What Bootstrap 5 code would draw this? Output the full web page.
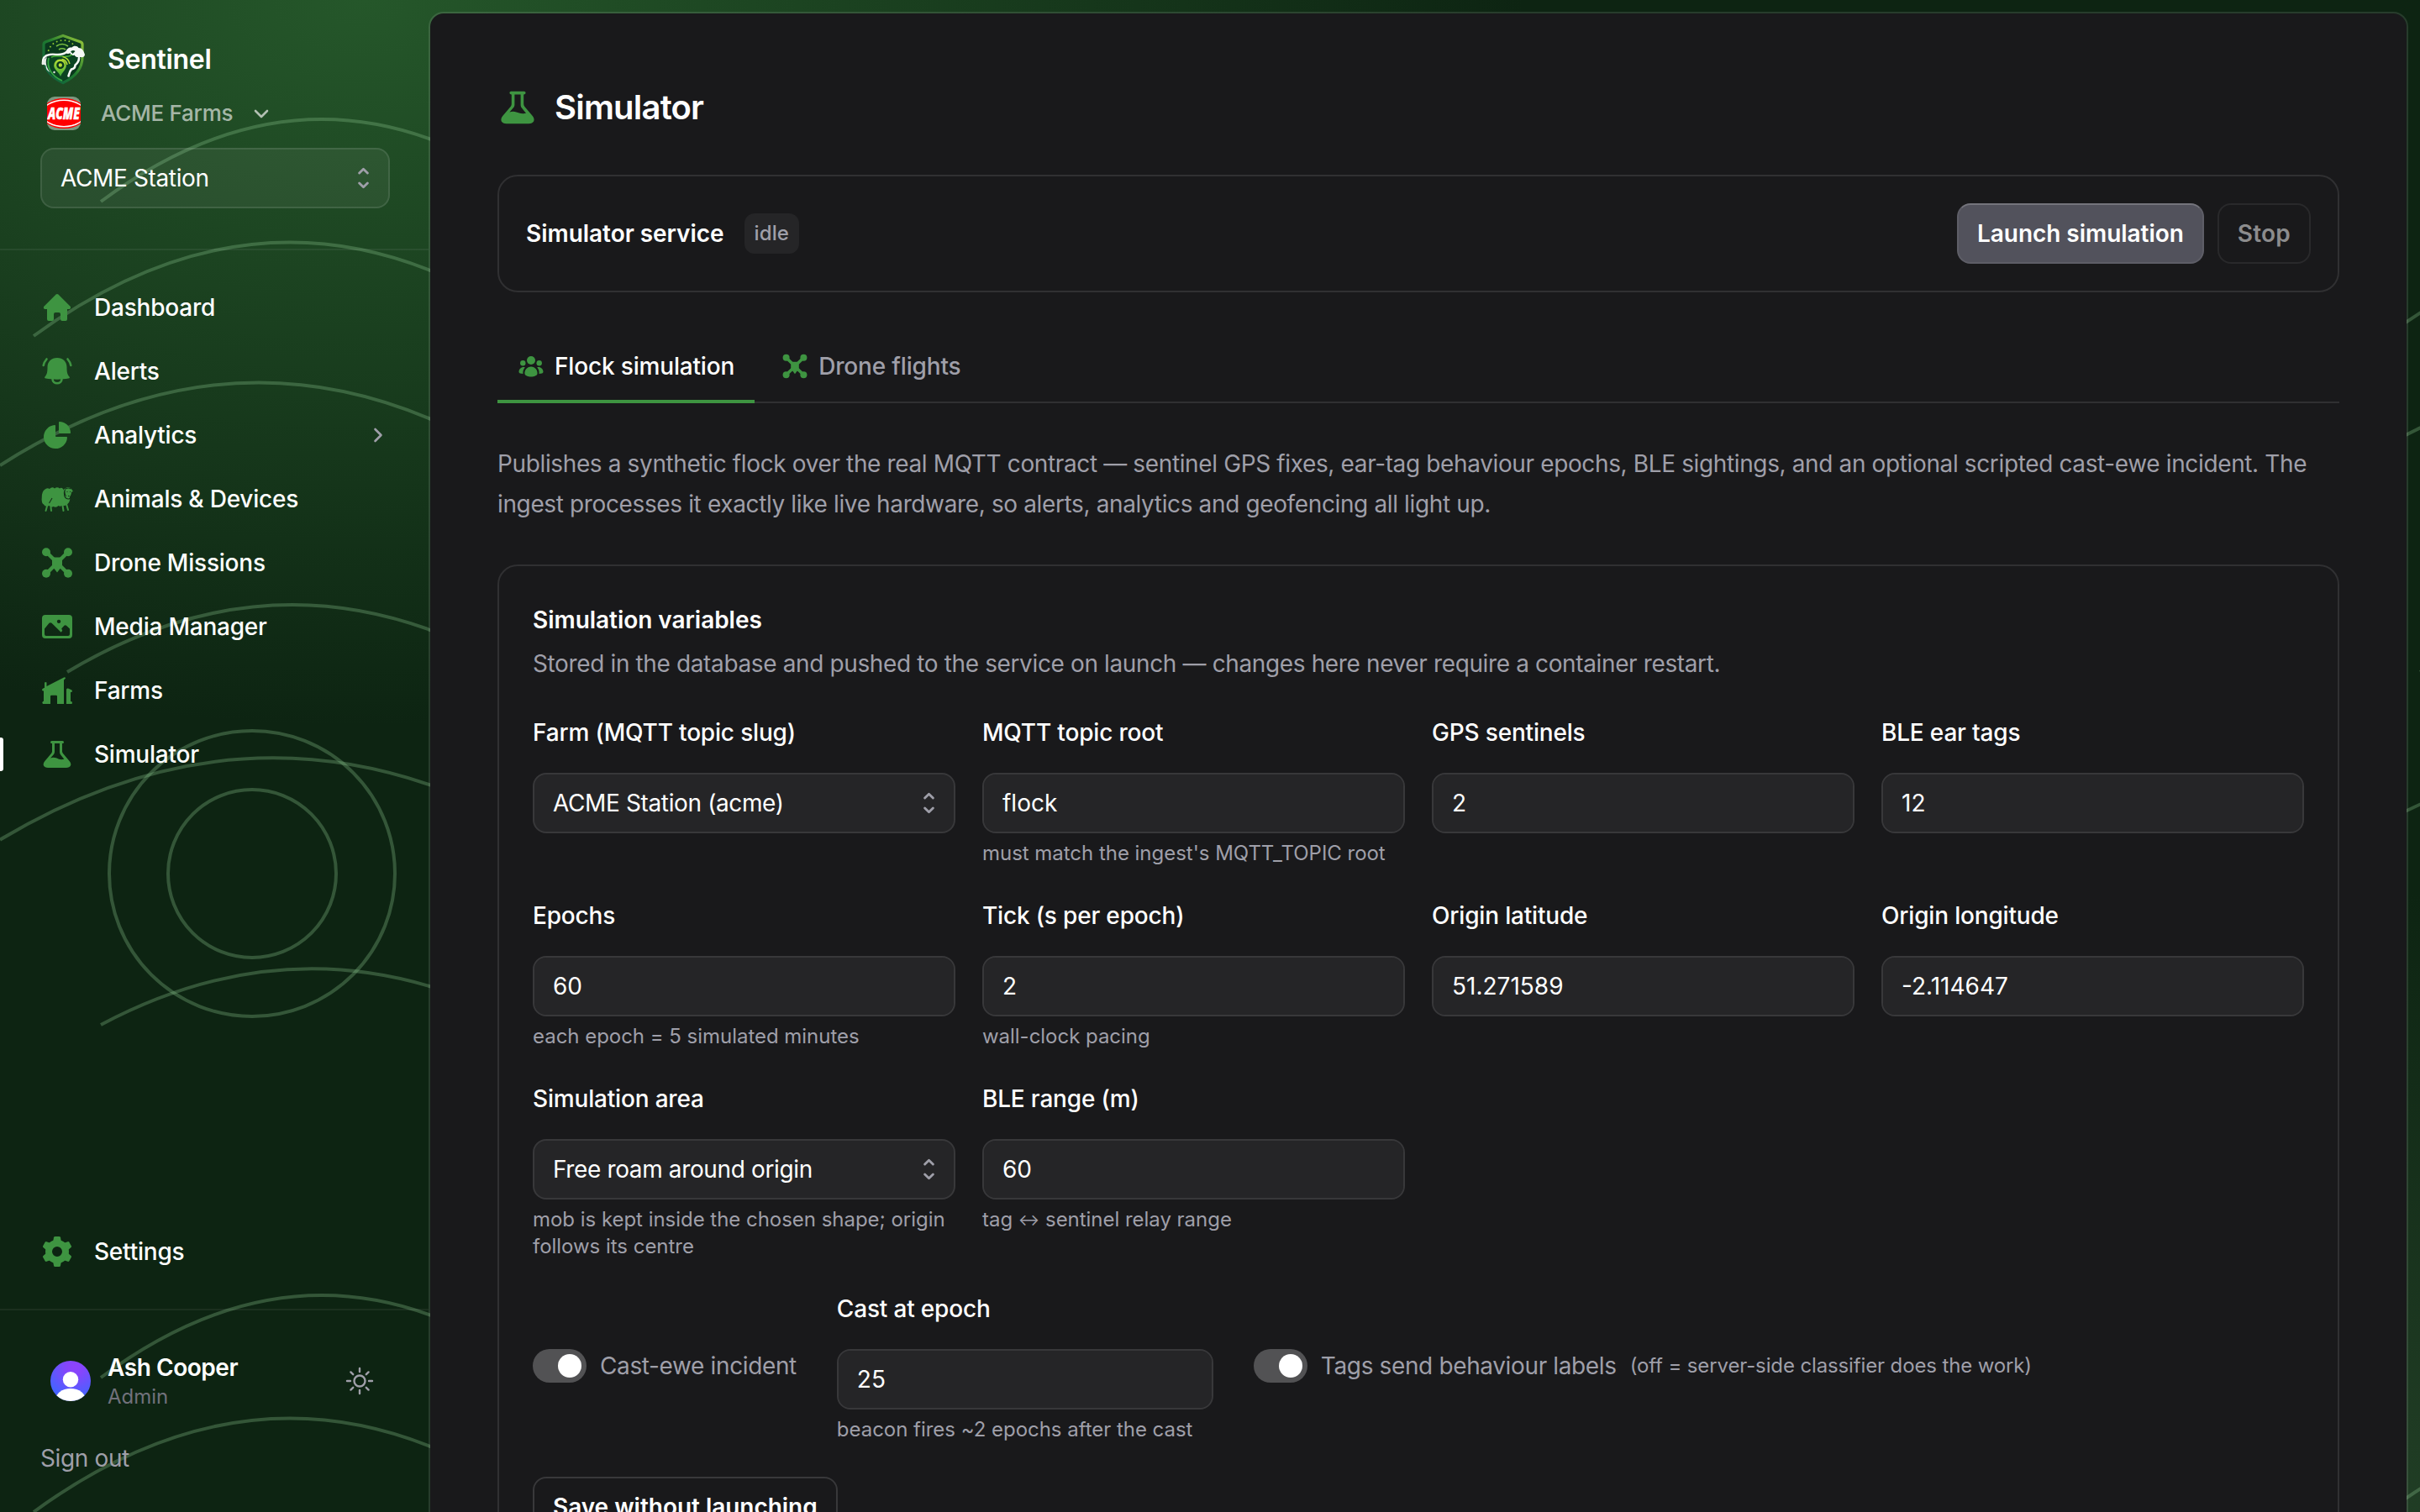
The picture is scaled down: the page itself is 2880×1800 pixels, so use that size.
<!DOCTYPE html>
<html lang="en" data-bs-theme="dark">
<head>
<meta charset="utf-8">
<title>Sentinel – Simulator</title>
<link href="https://cdn.jsdelivr.net/npm/bootstrap@5.3.0/dist/css/bootstrap.min.css" rel="stylesheet">
<style>
  :root { --leaf: #3e9441; --muted: #9f9fa9; }
  body {
    font-family: Inter, "Liberation Sans", sans-serif;
    font-size: 28px; line-height: 40px; color: #fff; letter-spacing: -.37px;
    height: 1800px; overflow: hidden;
    background:
      radial-gradient(1382px 864px at 15% 0, #25572a, rgba(13,36,18,0) 100%),
      radial-gradient(1500px 740px at 95% 100%, #223f26, rgba(13,36,18,0) 100%),
      #0d2412;
  }
  .contours { position: absolute; inset: 0; width: 2880px; height: 1800px; z-index: 0; }
  .shell { position: relative; height: 1800px; z-index: 1; overflow: hidden; }
  .side { width: 510px; flex: none; }
  .side-head { padding: 36px 46px 48px 48px; border-bottom: 2px solid rgba(255,255,255,.06); }
  .brand { height: 68px; font-size: 32px; font-weight: 600; letter-spacing: -.3px; gap: 24px; }
  .brand span { padding-top: 2px; }
  .org { height: 62px; font-size: 26px; font-weight: 500; color: rgba(255,255,255,.62); padding-left: 8px; gap: 24px; margin-bottom: 10px; letter-spacing: -.27px; }
  .form-control, .form-select {
    height: 72px; font-size: 28px; line-height: 40px; padding: 0 24px; color: #fff; letter-spacing: inherit;
    border: 2px solid #38383a; border-radius: 16px; background-color: #252527; padding-left: 22px;
  }
  .form-select {
    background-image: url("data:image/svg+xml,%3Csvg xmlns='http://www.w3.org/2000/svg' viewBox='0 0 12 24'%3E%3Cpath d='M1.5 6.5 6 2l4.5 4.5M1.5 17.5 6 22l4.5-4.5' fill='none' stroke='%239f9fa9' stroke-width='2.6' stroke-linecap='round' stroke-linejoin='round'/%3E%3C/svg%3E");
    background-size: 13px 26px; background-position: right 23px center; background-repeat: no-repeat;
  }
  input.form-control { letter-spacing: 0; }
  .side .form-select { background-color: rgba(255,255,255,.06); border-color: rgba(255,255,255,.1); }
  .side-nav { padding-top: 30px; }
  .side-link { height: 76px; padding: 0 54px 0 48px; gap: 24px; color: #fff; font-weight: 500; position: relative; letter-spacing: -.22px; }
  .side-link.active::before { content: ""; position: absolute; left: 0; top: 18px; width: 4px; height: 40px; background: #fff; border-radius: 0 3px 3px 0; }
  .ico { width: 40px; height: 40px; flex: none; fill: var(--leaf); color: var(--leaf); }
  .side-foot { margin-top: 30px; border-top: 2px solid rgba(255,255,255,.06); padding: 40px 64px 44px 48px; height: 242px; }
  .user { height: 88px; padding-left: 12px; gap: 20px; }
  .user-name { font-weight: 600; line-height: 38px; letter-spacing: -.45px; }
  .user-role { font-size: 24px; line-height: 32px; color: #71717b; letter-spacing: -.04px; }
  .signout { margin-top: 28px; color: var(--muted); }
  .pane { width: 2356px; flex: none; margin-top: 14px; height: 1900px; padding: 76px 80px 0; background: #19191b; background-clip: padding-box; border: 2px solid rgba(255,255,255,.11); border-radius: 18px; }
  .page-title { height: 72px; gap: 20px; font-size: 40px; font-weight: 600; letter-spacing: -.8px; margin: 0 0 44px; }
  .page-title .ico { width: 48px; height: 48px; }
  .panel { border: 2px solid #303032; border-radius: 24px; background: none; }
  .service { height: 140px; padding: 0 32px; margin-bottom: 44px; }
  .strong { font-weight: 600; letter-spacing: -.04px; }
  .state { font-size: 24px; line-height: 48px; font-weight: 500; padding: 0 12px; border-radius: 12px; background: #252527; color: var(--muted); margin-left: 24px; letter-spacing: .1px; }
  .btn { height: 72px; border-radius: 16px; border: 2px solid #38383a; padding: 0 22px; font-size: 28px; line-height: 40px; font-weight: 600; color: #fff; letter-spacing: -.04px; }
  .btn-go { background: #52525c; border-color: #5e5e67; border-top-color: #74747c; margin-right: 16px; }
  .btn:disabled { color: #8c8c8d; border-color: #29292b; opacity: 1; letter-spacing: .2px; }
  .nav-tabs { border-bottom: 2px solid #303032; height: 88px; gap: 8px; margin-bottom: 48px; }
  .nav-tabs .nav-link { height: 88px; padding: 4px 24px 0; gap: 12px; border: 0; border-bottom: 4px solid transparent; border-radius: 0; margin-bottom: -2px; color: var(--muted); font-weight: 500; background: none; letter-spacing: -.17px; }
  .nav-tabs .nav-link.active { color: #fff; background: none; border-bottom-color: var(--leaf); }
  .nav-tabs .ico { width: 32px; height: 32px; }
  .intro { color: var(--muted); line-height: 48px; margin: 0 0 48px; }
  .vars { padding: 44px 40px 60px; }
  .sub { color: var(--muted); margin: 12px 0 42px; }
  .fields { display: grid; grid-template-columns: repeat(4, 1fr); gap: 38px 32px; margin-bottom: 38px; }
  .form-label { display: block; font-weight: 500; margin: 0 0 28px; line-height: 40px; letter-spacing: -.18px; }
  .form-text { font-size: 24px; line-height: 32px; margin-top: 8px; color: var(--muted); letter-spacing: -.03px; }
  .arrow { font-size: 19px; letter-spacing: 0; position: relative; top: -1px; }
  .toggles { margin-bottom: 40px; }
  .toggle { height: 40px; margin-top: 68px; gap: 16px; color: var(--muted); }
  .form-check-input[type=checkbox] { width: 64px; height: 40px; margin: 0; border: 0; border-radius: 20px; flex: none; background-color: #525254;
    background-image: url("data:image/svg+xml,%3Csvg xmlns='http://www.w3.org/2000/svg' viewBox='0 0 64 40'%3E%3Ccircle cx='44' cy='20' r='14' fill='%23fff'/%3E%3C/svg%3E"); background-size: 64px 40px; background-position: center; }
  .form-check-input:checked { background-color: #525254; }
  .cast { width: 448px; margin: 0 48px 0 48px; }
  .note { font-size: 24px; letter-spacing: -.13px; }
</style>
<script src="https://cdn.jsdelivr.net/npm/bootstrap@5.3.0/dist/js/bootstrap.bundle.min.js"></script>
</head>
<body>

<svg class="contours" viewBox="0 0 2880 1800" aria-hidden="true">
  <defs>
    <g id="tile" fill="none" stroke="#8fcb91" stroke-opacity=".3" stroke-width="4">
      <path d="M120 240Q383 44 646 240"/>
      <path d="M40 400Q345 177 650 400"/>
      <path d="M0 554Q308 357 616 554"/>
      <path d="M80 800Q348 640 616 800"/>
      <path d="M0 999.700Q325 805 650 999.700"/>
      <path d="M120 1220Q371 1086.600 622 1220"/>
      <circle cx="300" cy="1040" r="170"/>
      <circle cx="300" cy="1040" r="100"/>
    </g>
    <symbol id="i-flask" viewBox="0 0 40 40"><path fill-rule="evenodd" d="M13.500 4h13a1.500 1.500 0 0 1 0 3H26v9.500c0 1 .4 1.800 1 2.600l7.800 9.200C38 32.300 36 36 31 36H9c-5 0-7-3.700-3.800-7.700L13 19.100c.6-.8 1-1.600 1-2.600V7h-.5a1.500 1.500 0 0 1 0-3ZM17 7v10c0 1.200-.4 2.300-1.200 3.200L12 24.500c4-1.500 7 0 9.500 1 2.500 1 5.500.6 6.800.2l-4.200-5.300c-.7-.9-1.100-2-1.100-3.200V7Z"/></symbol>
    <symbol id="i-drone" viewBox="0 0 40 40"><circle cx="7" cy="7.200" r="5"/><circle cx="33" cy="7.200" r="5"/><circle cx="7" cy="32.800" r="5"/><circle cx="33" cy="32.800" r="5"/><path d="M8 8 16 16M32 8l-8 8M8 32l8-8M32 32l-8-8" stroke="currentColor" stroke-width="4.500"/><path d="M14 13.500h12V27h-2.500L20 31.500 16.500 27H14Z"/></symbol>
    <linearGradient id="shield" x1="0" y1="1" x2="1" y2="0"><stop stop-color="#0b5a44"/><stop offset=".5" stop-color="#1f7a2e"/><stop offset="1" stop-color="#9ccb3b"/></linearGradient>
    <linearGradient id="pin" x1="0" y1="0" x2="0" y2="1"><stop stop-color="#b6dc35"/><stop offset="1" stop-color="#3fae3a"/></linearGradient>
    <radialGradient id="av" cx=".6" cy=".15" r=".75"><stop stop-color="#8e43fb"/><stop offset=".3" stop-color="#8446fc"/><stop offset="1" stop-color="#4762ff"/></radialGradient>
  </defs>
  <use href="#tile"/><use href="#tile" x="2800"/><use href="#tile" y="1400"/><use href="#tile" x="2800" y="1400"/>
</svg>

<div class="shell d-flex align-items-start">
  <aside class="side d-flex flex-column h-100">
    <div class="side-head">
      <div class="brand d-flex align-items-center">
        <svg width="56" height="62" viewBox="0 0 56 62" aria-hidden="true">
          <path d="M27 3.500 48 11c1.500.7 2 1.500 2 3v15c0 14-8.500 23.500-23 30.500C12 52.500 4 43 4 29V14c0-1.500.5-2.300 2-3Z" fill="#0a381d" stroke="url(#shield)" stroke-width="3.200"/>
          <path d="M9.500 22C13 8 33 5 39 14" fill="none" stroke="#8fc832" stroke-width="1.700" stroke-dasharray="1.700 3.300"/>
          <path d="M19 16q7-5 14 0M22 20q4-2.600 8 0" fill="none" stroke="#7cc142" stroke-width="1.600"/>
          <path d="M3 38C5 29 12 26.500 20 27c7 .3 12-3 18-1l8 5c-1 5-4 8-8 11l-3 11-9 4C13 53 9 45 8 40Z" fill="#0b4422"/>
          <path d="M30 24c1-6 5-7 7.500-6.500 2-2.500 6.500-2.300 8 .5 4 0 6 3 7.500 8-.5 3-2.500 3.500-6 3-3 1-5.500-.5-6.500-2.500-3 1.500-5-.5-5-2.500-1.500 1-3 1.500-5.500 0Z" fill="#f6f8f6"/>
          <path d="M36 22.500q3-2.500 5.500-.5l-3 3Z" fill="#0b4422"/>
          <path d="M31 23C24 28.500 18 24.500 11 26 4.500 27 2.500 31.500 2.800 37" fill="none" stroke="#f6f8f6" stroke-width="2.400" stroke-linecap="round"/>
          <path d="M2 37c1.500-4 3-6 6-8-2.500 6-1 12 3.500 18-4-2-5-5-5-8Z" fill="#e8ede9"/>
          <path d="M46 30c0 4-1.500 6-4.500 8.500 0 3-2 4.500-4.500 5-2 2-2.500 5-3.500 8" fill="none" stroke="#f6f8f6" stroke-width="2.600" stroke-linecap="round"/>
          <path d="M10 30C7 42 14 52 26 57" fill="none" stroke="#36a844" stroke-width="1.800"/>
          <path d="M13 29C22 25 30 32 38 26" fill="none" stroke="#4db63c" stroke-width="1.400"/>
          <path d="M23.500 31.500a7.300 7.300 0 0 1 7.300 7.500c0 4.500-4.500 7.500-6.800 13-2-5.500-7.800-8.500-7.800-13a7.300 7.300 0 0 1 7.300-7.500Z" fill="url(#pin)"/>
          <circle cx="23.800" cy="38.500" r="3.400" fill="#b6dc35" stroke="#0a381d" stroke-width="2.400"/>
          <path d="M25.500 31.500a8 8 0 0 1 6.500 6.500M26.500 28.500a11 11 0 0 1 8.500 8.500" fill="none" stroke="#b6dc35" stroke-width="1.500"/>
          <circle cx="16.500" cy="47" r="1.200" fill="#dfe9e0"/>
        </svg>
        <span>Sentinel</span>
      </div>
      <div class="org d-flex align-items-center">
        <svg width="40" height="40" viewBox="0 0 40 40" aria-hidden="true">
          <clipPath id="oc"><rect width="40" height="40" rx="9"/></clipPath>
          <g clip-path="url(#oc)"><rect width="40" height="40" fill="#7d977f"/><ellipse cx="20" cy="20" rx="27" ry="18" fill="#f00"/><ellipse cx="20" cy="20" rx="26" ry="16.500" fill="#fff"/><ellipse cx="20" cy="20" rx="25" ry="15" fill="#f00"/></g>
          <text x="1" y="26.800" textLength="38" lengthAdjust="spacingAndGlyphs" font-family="Open Sans, sans-serif" font-weight="800" font-style="italic" font-size="19" letter-spacing="0" fill="#fff" stroke="#fff" stroke-width=".5">ACME</text>
        </svg>
        <span>ACME Farms</span>
        <svg width="20" height="14" viewBox="0 0 20 14" fill="none" stroke="#b3c0b3" stroke-width="2.600" stroke-linecap="round" stroke-linejoin="round" aria-hidden="true"><path d="m3 4 7 7 7-7"/></svg>
      </div>
      <select class="form-select" aria-label="Station"><option>ACME Station</option></select>
    </div>

    <nav class="side-nav nav flex-column">
      <a class="side-link d-flex align-items-center text-decoration-none"><svg class="ico" viewBox="0 0 40 40"><path d="M18.600 4.600a2 2 0 0 1 2.800 0L35.400 18.500c1.400 1.400.6 3.500-1.400 3.500h-2v12a2 2 0 0 1-2 2h-4a2 2 0 0 1-2-2v-6a2 2 0 0 0-2-2h-4a2 2 0 0 0-2 2v6a2 2 0 0 1-2 2h-4a2 2 0 0 1-2-2V22H6c-2 0-2.800-2.100-1.400-3.500Z"/></svg>Dashboard</a>
      <a class="side-link d-flex align-items-center text-decoration-none"><svg class="ico" viewBox="0 0 40 40"><path d="M20 4c6.800 0 11.500 4.500 11.500 11 0 6 .6 8.500 3 11.500.8 1.200.3 2-1 2C26 30 14 30 6.500 28.500c-1.300 0-1.800-.8-1-2 2.400-3 3-5.500 3-11.500C8.500 8.500 13.200 4 20 4Z"/><path d="M14.500 29c0 7 11 7 11 0M7.500 5.500Q4.500 9 3.700 13M32.500 5.500q3 3.500 3.800 7.500" fill="none" stroke="currentColor" stroke-width="2.600" stroke-linecap="round"/></svg>Alerts</a>
      <a class="side-link d-flex align-items-center text-decoration-none"><svg class="ico" viewBox="0 0 40 40"><path d="M17 8.100c.6 0 1 .4 1 1V21a1 1 0 0 0 1 1h12c.6 0 1 .4 1 1A14 14 0 1 1 17 8.100Z"/><path d="M23 4c7.500.5 12.500 5.500 13 13 0 .6-.4 1-1 1H23a1 1 0 0 1-1-1V5c0-.6.400-1 1-1Z"/></svg><span>Analytics</span>
        <svg class="ms-auto" width="12" height="20" viewBox="0 0 12 20" fill="none" stroke="#9f9fa9" stroke-width="2.600" stroke-linecap="round" stroke-linejoin="round"><path d="m2.500 3 7 7-7 7"/></svg></a>
      <a class="side-link d-flex align-items-center text-decoration-none"><svg class="ico" viewBox="0 0 40 40"><path d="M5 9q3-3 6-1 3-3 6-.5 3-2.500 6 0 2-1.500 4 .5l.5 6 3 3h4.500q1 6-2.500 9-3 3-6 1.500-2.500 2-5 .5-2.500 3-6 1-3 2-5-1-4.500 2-6.500-1.500Q1 25 1.800 17.500 2 11 5 9Z"/><path d="M29 8q4-4 8 0l2 3-2 .8q0 4.500-3.500 6.700-3.500-1-4-6.500Z"/><path d="M9 25 6.500 34M12.500 30l.5 4M26 25l1.500 9M31 26l2 7M28.500 9q-2.500 4-1.200 7" fill="none" stroke="currentColor" stroke-width="2" stroke-linecap="round"/><path d="M29.500 8.500q-2 4-.8 8 2 4 5.300 3.500 3.500-1.500 3.600-7M31.500 11.500h1M35 11.500h1M14 19l-3.500 6M30 8q3.500-2 6.500 0M33 16.500h1.500" stroke="#143019" stroke-width="1.100" fill="none"/></svg>Animals &amp; Devices</a>
      <a class="side-link d-flex align-items-center text-decoration-none"><svg class="ico"><use href="#i-drone"/></svg>Drone Missions</a>
      <a class="side-link d-flex align-items-center text-decoration-none"><svg class="ico" viewBox="0 0 40 40"><path fill-rule="evenodd" d="M6 6h28a4 4 0 0 1 4 4v20a4 4 0 0 1-4 4H6a4 4 0 0 1-4-4V10a4 4 0 0 1 4-4ZM5 22.500V29a2 2 0 0 0 2 2h26a2 2 0 0 0 2-2v-6.500l-4-3.700q-1.300-1-2.600 0l-3.200 3.500 1 2.500-1.500 2-11.200-11q-1.500-1.300-3 0ZM22 11.700a2.200 2.200 0 1 0 .1 0Z"/></svg>Media Manager</a>
      <a class="side-link d-flex align-items-center text-decoration-none"><svg class="ico" viewBox="0 0 40 40"><path d="M5 10.500q1.500-1 2.500 0V15L28 4.400q1.800-.6 2 1L28 7.500V36h-8V27q0-1.300-1.300-1.300h-5.400Q12 25.700 12 27v9H3q-1.500-1.500 0-3l1-.3V20.500H3q-2-1.200 0-2.800l2-1ZM31 19q0-2 2-1.500l4.500 2q1 1.500-.2 2.500H36V33l1.500.3q1 1.500 0 2.700H31Z"/></svg>Farms</a>
      <a class="side-link active d-flex align-items-center text-decoration-none"><svg class="ico"><use href="#i-flask"/></svg>Simulator</a>
    </nav>

    <a class="side-link mt-auto d-flex align-items-center text-decoration-none"><svg class="ico" viewBox="0 0 40 40"><circle cx="20" cy="20" r="10" fill="none" stroke="currentColor" stroke-width="8"/><g><path id="tooth" d="M17.500 2h5q1.200 0 1.500 1.200L25 8.500H15l1-5.300Q16.300 2 17.500 2Z"/><use href="#tooth" transform="rotate(60 20 20)"/><use href="#tooth" transform="rotate(120 20 20)"/><use href="#tooth" transform="rotate(180 20 20)"/><use href="#tooth" transform="rotate(240 20 20)"/><use href="#tooth" transform="rotate(300 20 20)"/></g></svg>Settings</a>

    <div class="side-foot">
      <div class="user d-flex align-items-center">
        <svg width="48" height="48" viewBox="0 0 48 48" aria-hidden="true"><clipPath id="ac"><circle cx="24" cy="24" r="24"/></clipPath><circle cx="24" cy="24" r="24" fill="url(#av)"/><g clip-path="url(#ac)" fill="#fff"><circle cx="24" cy="22.300" r="9.200"/><ellipse cx="24" cy="47.500" rx="18.500" ry="14.500"/></g></svg>
        <div><div class="user-name">Ash Cooper</div><div class="user-role">Admin</div></div>
        <svg class="ms-auto" width="36" height="36" viewBox="0 0 36 36" fill="none" stroke="#9f9fa9" stroke-width="2.400" stroke-linecap="round" aria-hidden="true"><circle cx="18" cy="18" r="6.500"/><path d="M18 3v4M18 29v4M3 18h4M29 18h4M7.400 7.400l2.800 2.800M25.800 25.800l2.800 2.800M7.400 28.600l2.800-2.800M25.800 10.200l2.800-2.800"/></svg>
      </div>
      <div class="signout">Sign out</div>
    </div>
  </aside>

  <main class="pane">
    <h1 class="page-title d-flex align-items-center"><svg class="ico"><use href="#i-flask"/></svg>Simulator</h1>

    <section class="panel service d-flex align-items-center">
      <span class="strong">Simulator service</span>
      <span class="state">idle</span>
      <button class="btn btn-go ms-auto">Launch simulation</button>
      <button class="btn" disabled>Stop</button>
    </section>

    <ul class="nav nav-tabs">
      <li class="nav-item"><a class="nav-link active d-flex align-items-center"><svg class="ico" viewBox="0 0 32 32"><circle cx="16" cy="9" r="5"/><circle cx="6.300" cy="12.300" r="3.200"/><circle cx="25.700" cy="12.300" r="3.200"/><path d="M16 16.500c5 0 8 4.500 7.500 8.500-.3 2-3.800 3.500-7.500 3.500s-7.200-1.500-7.500-3.500C8 21 11 16.500 16 16.500ZM8.800 17.300C7 19.500 6 22 6.500 25 3.500 25 1.500 24 1.500 22.700c0-3.500 3.500-6.500 7.300-5.400ZM23.200 17.300c1.800 2.200 2.800 4.700 2.300 7.700 3 0 5-1 5-2.300 0-3.500-3.500-6.500-7.300-5.400Z"/></svg>Flock simulation</a></li>
      <li class="nav-item"><a class="nav-link d-flex align-items-center"><svg class="ico"><use href="#i-drone"/></svg>Drone flights</a></li>
    </ul>

    <p class="intro">Publishes a synthetic flock over the real MQTT contract — sentinel GPS fixes, ear-tag behaviour epochs, BLE sightings, and an optional scripted cast-ewe incident. The ingest processes it exactly like live hardware, so alerts, analytics and geofencing all light up.</p>

    <section class="panel vars">
      <div class="strong">Simulation variables</div>
      <div class="sub">Stored in the database and pushed to the service on launch — changes here never require a container restart.</div>

      <div class="fields">
        <div><label class="form-label">Farm (MQTT topic slug)</label><select class="form-select"><option>ACME Station (acme)</option></select></div>
        <div><label class="form-label">MQTT topic root</label><input class="form-control" value="flock"><div class="form-text">must match the ingest's MQTT_TOPIC root</div></div>
        <div><label class="form-label">GPS sentinels</label><input class="form-control" value="2"></div>
        <div><label class="form-label">BLE ear tags</label><input class="form-control" value="12"></div>

        <div><label class="form-label">Epochs</label><input class="form-control" value="60"><div class="form-text">each epoch = 5 simulated minutes</div></div>
        <div><label class="form-label">Tick (s per epoch)</label><input class="form-control" value="2"><div class="form-text">wall-clock pacing</div></div>
        <div><label class="form-label">Origin latitude</label><input class="form-control" value="51.271589"></div>
        <div><label class="form-label">Origin longitude</label><input class="form-control" value="-2.114647"></div>

        <div><label class="form-label">Simulation area</label><select class="form-select"><option>Free roam around origin</option></select><div class="form-text">mob is kept inside the chosen shape; origin follows its centre</div></div>
        <div><label class="form-label">BLE range (m)</label><input class="form-control" value="60"><div class="form-text">tag <span class="arrow">↔</span> sentinel relay range</div></div>
      </div>

      <div class="toggles d-flex align-items-start">
        <div class="toggle d-flex align-items-center"><input class="form-check-input" type="checkbox" checked><span>Cast-ewe incident</span></div>
        <div class="cast"><label class="form-label">Cast at epoch</label><input class="form-control" value="25"><div class="form-text">beacon fires ~2 epochs after the cast</div></div>
        <div class="toggle d-flex align-items-center"><input class="form-check-input" type="checkbox" checked><span>Tags send behaviour labels</span><span class="note">(off = server-side classifier does the work)</span></div>
      </div>

      <button class="btn">Save without launching</button>
    </section>
  </main>
</div>
</body>
</html>
